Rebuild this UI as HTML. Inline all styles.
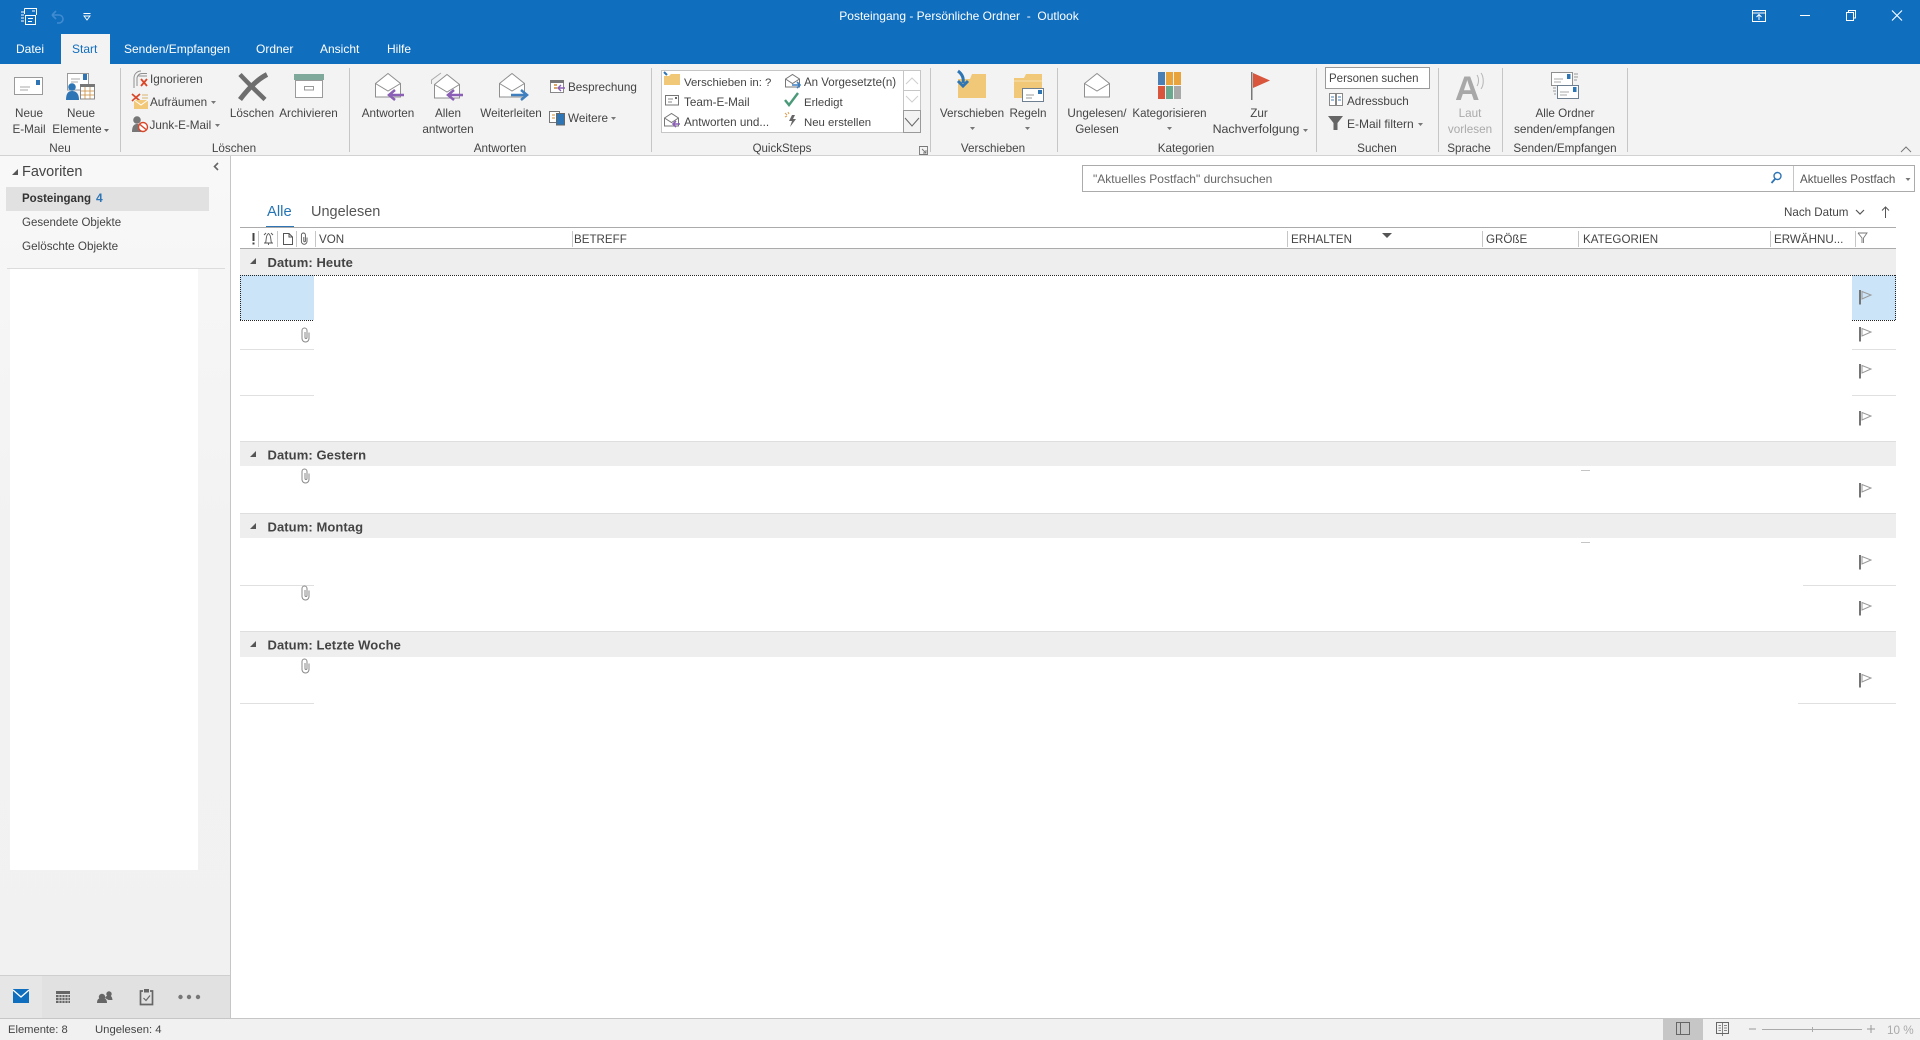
<!DOCTYPE html>
<html lang="de"><head><meta charset="utf-8"><title>Posteingang - Persönliche Ordner - Outlook</title>
<style>
html,body{margin:0;padding:0;width:1920px;height:1040px;overflow:hidden;background:#fff}
svg{display:block;font-family:"Liberation Sans",sans-serif;font-size:11.7px}
text{fill:#444}
.m{text-anchor:middle}
.w{fill:#fff;font-size:12px}
.t{font-size:11.6px}
.b{font-weight:bold;font-size:13px;letter-spacing:.08px}
.g{fill:#aaa}
</style></head><body>
<svg width="1920" height="1040" viewBox="0 0 1920 1040" xmlns="http://www.w3.org/2000/svg">
<defs>
<g id="flag"><rect x="0" y="0" width="2" height="14.5" fill="#757575"/><path d="M3 1.5V9L12 5Z" fill="none" stroke="#999" stroke-width="1"/></g>
<g id="clip"><path d="M8 5.5V11.5a3.5 3.5 0 0 1-7 0V3.5a2.5 2.5 0 0 1 5 0V10.5a1 1 0 0 1-2 0V5" fill="none" stroke="#888" stroke-width="1"/></g>
<g id="tri"><path d="M0 6L6 0V6Z" fill="#555"/></g>
<g id="open"><path d="M.5 10.5L13 .5 25.5 10.5V24H.5Z" fill="#fff" stroke="#8f8f8f"/><path d="M.5 10.5L13 18 25.5 10.5" fill="none" stroke="#8f8f8f"/></g>
<g id="mini"><path d="M.5 5L7.5 .5 14.5 5V13H.5Z" fill="#fff" stroke="#777"/><path d="M.5 5L7.5 9.5 14.5 5" fill="none" stroke="#777"/></g>
<linearGradient id="sb" x1="0" y1="0" x2="0" y2="1"><stop offset="0" stop-color="#f8f8f8"/><stop offset=".45" stop-color="#f2f2f2"/><stop offset="1" stop-color="#f1f1f1"/></linearGradient>
</defs>

<!-- title bar -->
<rect width="1920" height="64" fill="#106ebe"/>
<rect x="61" y="34" width="49" height="30" fill="#f3f3f3"/>
<g fill="none" stroke="#fff" stroke-width="1">
<path d="M24.5 8.5H36.5V15M24.5 8.5V14M21 12H24M21 15H24M21 18H24M21 21H24"/><rect x="25.5" y="15.5" width="10" height="9"/><path d="M28 18.5H33M28 21.5H32M32 11H35"/>
</g>
<path d="M52 15H59a4 4 0 0 1 0 8h-2M52 15l4-4M52 15l4 4" fill="none" stroke="#3f8bd0" stroke-width="1.6"/>
<path d="M83.5 13.5H90.5" stroke="#fff"/><path d="M84 16H90L87 20Z" fill="none" stroke="#fff" stroke-width=".9"/>
<text class="w m" x="959" y="20">Posteingang - Persönliche Ordner &#160;-&#160; Outlook</text>
<g fill="none" stroke="#fff">
<rect x="1752.5" y="10.5" width="13" height="11"/><path d="M1753 13H1765"/><path d="M1759 20V15M1756.5 17l2.5-2.5 2.5 2.5"/>
<path d="M1800 15.5H1810"/>
<rect x="1846.5" y="12.5" width="7" height="8"/><path d="M1848.5 12V10.5H1855.5V18H1854"/>
<path d="M1892 10.5L1902 20.5M1902 10.5L1892 20.5" stroke-width="1.1"/>
</g>
<text class="w" x="16" y="53">Datei</text>
<text x="72" y="53" style="fill:#106ebe;font-size:12px">Start</text>
<text class="w" x="124" y="53">Senden/Empfangen</text>
<text class="w" x="256" y="53">Ordner</text>
<text class="w" x="320" y="53">Ansicht</text>
<text class="w" x="387" y="53">Hilfe</text>

<!-- ribbon -->
<rect y="64" width="1920" height="92" fill="#f3f3f3"/>
<rect y="155" width="1920" height="1" fill="#d2d2d2"/>
<g fill="#c6c6c6">
<rect x="120" y="68" width="1" height="84"/><rect x="349" y="68" width="1" height="84"/><rect x="651" y="68" width="1" height="84"/><rect x="930" y="68" width="1" height="84"/><rect x="1057" y="68" width="1" height="84"/><rect x="1316" y="68" width="1" height="84"/><rect x="1438" y="68" width="1" height="84"/><rect x="1502" y="68" width="1" height="84"/><rect x="1627" y="68" width="1" height="84"/>
</g>

<!-- Neu -->
<rect x="14.5" y="77.5" width="28" height="17" fill="#fff" stroke="#9a9a9a"/><rect x="36" y="80" width="4" height="5" fill="#2e75b5"/><path d="M20 87H30M20 90H28" stroke="#aaa"/>
<path d="M67.5 73.5H88.5V90H67.5Z" fill="#fff" stroke="#9a9a9a"/><rect x="83" y="74" width="4" height="6" fill="#2e75b5"/><path d="M71 79H80M71 82H78" stroke="#aaa"/>
<circle cx="72" cy="87" r="3.8" fill="#2e75b5"/><path d="M66 100c0-7 2.5-9 6-9s7 2 7 9Z" fill="#2e75b5"/>
<rect x="80.5" y="85" width="14" height="14" fill="#fff" stroke="#888"/><rect x="80" y="84" width="15" height="3" fill="#777"/><path d="M85 87V99M90 87V99M81 91H94M81 95H94" stroke="#c98a3a" stroke-width=".8"/>
<text class="m" x="29" y="117">Neue</text><text class="m" x="29" y="133">E-Mail</text>
<text class="m" x="81" y="117">Neue</text><text class="m" x="77" y="133">Elemente</text><path d="M104 129h5l-2.5 3z" fill="#666"/>
<text class="m" x="60" y="152">Neu</text>

<!-- Löschen -->
<g fill="none"><path d="M137 84V76.5a5 5 0 0 1 5-5H147M134 86V76a7 7 0 0 1 7-7" stroke="#8f8f8f" transform="translate(0 2)"/><path d="M138.5 76H147" stroke="#8f8f8f"/><path d="M141 79L147 86M147 79L141 86" stroke="#d9472b" stroke-width="1.8"/></g>
<text x="150" y="83">Ignorieren</text>
<path d="M132 94L140 101M140 94L132 101" stroke="#d9472b" stroke-width="1.8"/><path d="M134 100H148V109H134Z" fill="#f2c879"/><path d="M134 100L141 105 148 100" fill="none" stroke="#fff"/><path d="M142 95H148M142 98H148" stroke="#d8b36c"/>
<text x="150" y="106">Aufräumen</text><path d="M211 101h5l-2.5 3z" fill="#777"/>
<circle cx="137" cy="120" r="3.8" fill="#777"/><path d="M132 132c0-6 2-8 5-8s5 2 5 8Z" fill="#777"/><circle cx="143" cy="127" r="4.5" fill="#fff" stroke="#d9472b" stroke-width="1.4"/><path d="M140 124.5L146 129.5" stroke="#d9472b" stroke-width="1.4"/>
<text x="149.5" y="129">Junk-E-Mail</text><path d="M215 124h5l-2.5 3z" fill="#777"/>
<path d="M240 74.5C247 82 255 90 265 99.5" fill="none" stroke="#6e6e6e" stroke-width="4.5"/><path d="M267 74.5C258 79 248 89 240 99.5" fill="none" stroke="#6e6e6e" stroke-width="5"/>
<rect x="294" y="74" width="30" height="6" fill="#7fa99b"/><rect x="295.5" y="80.5" width="27" height="17" fill="#fff" stroke="#9a9a9a"/><rect x="304.5" y="86.5" width="9" height="3.5" fill="none" stroke="#999"/>
<text class="m" x="252" y="117">Löschen</text><text class="m" x="308.5" y="117">Archivieren</text>
<text class="m" x="234" y="152">Löschen</text>

<!-- Antworten -->
<use href="#open" x="375" y="73"/><path d="M404 95H390M395 90l-6 5 6 5" fill="none" stroke="#8a5fb5" stroke-width="2.5"/>
<path d="M431.5 84V80L441 73" fill="none" stroke="#aaa"/><use href="#open" x="434" y="74"/><path d="M463 95H449M454 90l-6 5 6 5" fill="none" stroke="#8a5fb5" stroke-width="2.5"/>
<use href="#open" x="499" y="73"/><path d="M511 95H526M521 90l6 5-6 5" fill="none" stroke="#3f7fbf" stroke-width="2.5"/>
<rect x="550.5" y="80.5" width="13" height="12" fill="#fff" stroke="#888"/><rect x="550" y="80" width="14" height="3" fill="#777"/><path d="M554 85H557M554 88H557" stroke="#d08a2e" stroke-width="1.5"/><path d="M565 88H558M561 85l-3 3 3 3" fill="none" stroke="#8a5fb5" stroke-width="1.4"/>
<rect x="549.5" y="111.5" width="10" height="11" fill="#fff" stroke="#777"/><rect x="556.5" y="113.5" width="8" height="11.5" fill="#2e75b5" stroke="#666"/><path d="M552 115H555M552 118H555" stroke="#d08a2e"/>
<text class="m" x="388" y="117">Antworten</text><text class="m" x="448" y="117">Allen</text><text class="m" x="448" y="133">antworten</text><text class="m" x="511" y="117">Weiterleiten</text>
<text x="568" y="91">Besprechung</text><text x="568" y="122">Weitere</text><path d="M611 117h5l-2.5 3z" fill="#777"/>
<text class="m" x="500" y="152">Antworten</text>

<!-- QuickSteps -->
<rect x="661.5" y="70.5" width="259" height="62" fill="#fff" stroke="#c6c6c6"/>
<path d="M903.5 70.5V132.5" stroke="#c6c6c6"/><path d="M904 90.5H920M904 110.5H920" stroke="#c6c6c6"/><rect x="903.5" y="110.5" width="17" height="22" fill="#f3f3f3" stroke="#9a9a9a"/>
<path d="M906 84l6-6 6 6M906 96l6 6 6-6" fill="none" stroke="#cfcfcf"/><path d="M905 118l7 8 7-8" fill="none" stroke="#666"/>
<path d="M664 76H669L671 74H680V85H664Z" fill="#f0c878"/><path d="M664 72l3 3" stroke="#2e75b5" stroke-width="2"/>
<rect x="665.5" y="95.5" width="13" height="9.5" fill="#fff" stroke="#777"/><path d="M668 99H673M668 102H672" stroke="#888"/><rect x="675" y="97" width="2" height="2" fill="#666"/>
<use href="#mini" x="664" y="113"/><path d="M680 124H673M676 121l-3 3 3 3" fill="none" stroke="#8a5fb5" stroke-width="1.6"/>
<use href="#mini" x="785" y="74"/><path d="M792 85H800M797 82l3 3-3 3" fill="none" stroke="#3f7fbf" stroke-width="1.6"/>
<path d="M785 100l4 5 9-12" fill="none" stroke="#4a9a7a" stroke-width="2.4"/>
<path d="M792 115l-3 6h3l-2 6 6-8h-3l2-4Z" fill="#666"/><path d="M785 113l2 2M785 117l2-1M788 112l1 2" stroke="#e0a050"/>
<g style="font-size:11.4px"><text x="684" y="86">Verschieben in: ?</text><text x="684" y="106" style="font-size:11.7px">Team-E-Mail</text><text x="684" y="126" style="font-size:11.7px">Antworten und...</text>
<text x="804" y="86" style="font-size:11.5px">An Vorgesetzte(n)</text><text x="804" y="106">Erledigt</text><text x="804" y="126">Neu erstellen</text></g>
<text class="m" x="782" y="152" style="font-size:11.5px">QuickSteps</text>
<path d="M919.5 146.5H927.5V154.5H919.5Z M922 149L926 153M926 150V153H923" fill="none" stroke="#777" stroke-width=".9"/>

<!-- Verschieben -->
<path d="M958 79H970L972 74H986V98H958Z" fill="#f0c878"/><path d="M958 71c4 3 6 7 5 12M958 81l5 5 5-5" fill="none" stroke="#2e75b5" stroke-width="3"/>
<path d="M1014 78H1024L1026 74H1042V98H1014Z" fill="#f0c878"/><path d="M1014 81H1042" stroke="#f8e2b2"/><rect x="1022.5" y="88.5" width="21" height="13" fill="#fff" stroke="#6d7f90"/><rect x="1038" y="90" width="4" height="4" fill="#2e75b5"/><path d="M1026 95H1034M1026 98H1032" stroke="#999"/>
<text class="m" x="972" y="117">Verschieben</text><path d="M970 127h5l-2.5 3z" fill="#777"/><text class="m" x="1028" y="117">Regeln</text><path d="M1025 127h5l-2.5 3z" fill="#777"/>
<text class="m" x="993" y="152">Verschieben</text>

<!-- Kategorien -->
<use href="#open" x="1084" y="73"/>
<rect x="1158" y="72" width="7" height="13" fill="#4a7fb5"/><rect x="1166" y="72" width="7" height="13" fill="#e8a33c"/><rect x="1174" y="72" width="7" height="13" fill="#e8a33c"/>
<rect x="1158" y="86" width="7" height="13" fill="#d9553c"/><rect x="1166" y="86" width="7" height="13" fill="#6aa88f"/><rect x="1174" y="86" width="7" height="13" fill="#a8a8a8"/>
<rect x="1251" y="72" width="1.5" height="28" fill="#777"/><path d="M1253 73V88L1270 80.5Z" fill="#d9553c"/>
<text class="m" x="1097" y="117">Ungelesen/</text><text class="m" x="1097" y="133">Gelesen</text>
<text class="m" x="1169.5" y="117" style="font-size:11.5px">Kategorisieren</text><path d="M1167 127h5l-2.5 3z" fill="#777"/>
<text class="m" x="1259" y="117">Zur</text><text class="m" x="1256" y="133" style="font-size:12.4px">Nachverfolgung</text><path d="M1303 129h5l-2.5 3z" fill="#777"/>
<text class="m" x="1186" y="152">Kategorien</text>

<!-- Suchen -->
<rect x="1325.5" y="67.5" width="104" height="21" fill="#fff" stroke="#9a9a9a"/>
<text x="1329" y="82" style="font-size:11.5px">Personen suchen</text>
<rect x="1329.5" y="93.5" width="6" height="12" fill="#fff" stroke="#888"/><rect x="1336.5" y="93.5" width="6" height="12" fill="#fff" stroke="#888"/><path d="M1331 97H1334M1331 100H1334M1338 97H1341M1338 100H1341" stroke="#4a7fb5"/>
<text x="1347" y="105">Adressbuch</text>
<path d="M1328 116H1343L1337.5 123V130H1333.5V123Z" fill="#666"/>
<text x="1347" y="128" style="font-size:12px">E-Mail filtern</text><path d="M1418 123h5l-2.5 3z" fill="#777"/>
<text class="m" x="1377" y="152">Suchen</text>

<!-- Sprache / Senden -->
<text x="1455" y="100" style="font-size:34px;font-weight:bold;fill:#a8a8a8">A</text>
<path d="M1477 75c2 3 2 8 0 11M1481 73c3 4 3 12 0 16" fill="none" stroke="#b5b5b5"/>
<text class="m g" x="1470" y="117">Laut</text><text class="m g" x="1470" y="133">vorlesen</text><text class="m" x="1469" y="152">Sprache</text>
<rect x="1551.5" y="72.5" width="21" height="13" fill="#fff" stroke="#8f8f8f"/><rect x="1567" y="74" width="3.5" height="5" fill="#2e75b5"/><path d="M1554 79H1563M1554 82H1561" stroke="#aaa"/>
<rect x="1557.5" y="85.5" width="21" height="13" fill="#fff" stroke="#6d7f90"/><rect x="1573" y="87" width="3.5" height="5" fill="#2e75b5"/><path d="M1560 92H1569M1560 95H1567" stroke="#aaa"/>
<path d="M1574 74H1578M1574 77H1578M1574 80H1577M1553 88H1556M1553 91H1556M1554 94H1556" stroke="#999"/>
<text class="m" x="1565" y="117">Alle Ordner</text><text class="m" x="1564.5" y="133" style="font-size:11.8px">senden/empfangen</text><text class="m" x="1565" y="152" style="font-size:11.7px">Senden/Empfangen</text>
<path d="M1901 152l5-5 5 5" fill="none" stroke="#777"/>

<!-- sidebar -->
<rect y="156" width="230" height="862" fill="url(#sb)"/>
<rect x="230" y="156" width="1" height="862" fill="#c6c6c6"/>
<rect x="10" y="269" width="188" height="601" fill="#fff"/>
<path d="M12 175L18 169V175Z" fill="#555"/>
<text x="22" y="176" style="font-size:14.5px">Favoriten</text>
<path d="M218 163l-3.5 3.5 3.5 3.5" fill="none" stroke="#666" stroke-width="1.6"/>
<rect x="6" y="187" width="203" height="24" fill="#e1e1e1"/>
<text x="22" y="202" style="font-weight:bold;font-size:11.5px;fill:#333">Posteingang</text>
<text x="96" y="202" style="font-weight:bold;font-size:12px;fill:#2e75b5">4</text>
<text x="22" y="226" style="font-size:11.5px">Gesendete Objekte</text>
<text class="t" x="22" y="250" style="font-size:11.7px">Gelöschte Objekte</text>
<rect x="7" y="268" width="218" height="1" fill="#dcdcdc"/>
<!-- nav -->
<rect y="975" width="230" height="43" fill="#e1e1e1"/><rect y="975" width="230" height="1" fill="#cfcfcf"/>
<rect width="42" y="976" height="42" fill="#e6e6e6"/>
<rect x="13" y="989" width="16" height="14" fill="#106ebe"/><path d="M13 990L21 997 29 990" fill="none" stroke="#fff" stroke-width="1.3"/>
<rect x="56" y="991" width="14" height="3" fill="#666"/><path d="M56 995h14v8h-14z" fill="#666"/><path d="M59 995V1003M62 995V1003M65 995V1003M68 995V1003M56 997.5H70M56 1000.5H70" stroke="#e1e1e1" stroke-width=".8"/>
<circle cx="102" cy="997" r="3.2" fill="#666"/><path d="M97 1003c0-4 2-5 5-5s5 1 5 5Z" fill="#666"/><circle cx="109" cy="994" r="2.7" fill="#666"/><path d="M105 998c1-2 2-2.5 4-2.5 2 0 3 1 3.5 4.5h-4Z" fill="#666"/>
<path d="M143 991H140.5V1004.5H152.5V991H150" fill="none" stroke="#666" stroke-width="1.7"/><rect x="144" y="989" width="5" height="3.5" fill="#666"/><path d="M143.5 998l2.5 2.5 4-5" fill="none" stroke="#666" stroke-width="1.2"/>
<circle cx="180.5" cy="997" r="2.2" fill="#777"/><circle cx="189" cy="997" r="2.2" fill="#777"/><circle cx="198" cy="997" r="2.2" fill="#777"/>

<!-- search -->
<rect x="1082.5" y="165.5" width="832" height="26" fill="#fff" stroke="#ababab"/>
<rect x="1793" y="166" width="1" height="25" fill="#c6c6c6"/>
<text x="1093" y="183" style="font-size:12px;fill:#666">"Aktuelles Postfach" durchsuchen</text>
<circle cx="1777.5" cy="176" r="3.5" fill="none" stroke="#2e75b5" stroke-width="1.4"/><path d="M1775 179l-3.5 4" stroke="#2e75b5" stroke-width="1.8"/>
<text x="1800" y="183" style="font-size:11.6px;fill:#555">Aktuelles Postfach</text>
<path d="M1905.5 178h5l-2.5 3z" fill="#777"/>

<!-- tabs -->
<text x="267" y="216" style="font-size:14.8px;fill:#2474b5">Alle</text>
<text x="311" y="216" style="font-size:14.5px;fill:#555">Ungelesen</text>
<rect x="266" y="226" width="28" height="1.5" fill="#2e75b5"/>
<text x="1784" y="216" style="font-size:11.6px">Nach Datum</text>
<path d="M1856 210l4 4 4-4" fill="none" stroke="#555" stroke-width="1.2"/>
<path d="M1885.5 218V207M1882 210.5l3.5-3.5 3.5 3.5" fill="none" stroke="#555"/>

<!-- header -->
<rect x="240" y="227" width="1656" height="1" fill="#ababab"/>
<rect x="240" y="248" width="1656" height="1" fill="#ababab"/>
<g fill="#c6c6c6">
<rect x="258" y="231" width="1" height="16"/><rect x="277" y="231" width="1" height="16"/><rect x="296" y="231" width="1" height="16"/><rect x="315" y="231" width="1" height="16"/><rect x="572" y="231" width="1" height="16"/><rect x="1287" y="231" width="1" height="16"/><rect x="1482" y="231" width="1" height="16"/><rect x="1578" y="231" width="1" height="16"/><rect x="1770" y="231" width="1" height="16"/><rect x="1855" y="231" width="1" height="16"/>
</g>
<rect x="252.5" y="233" width="2" height="8" fill="#444"/><rect x="252.5" y="242.5" width="2" height="2" fill="#444"/>
<path d="M264 243H273M265.5 243c1-2 0-8 3-9.5 3 1.5 2 7.5 3 9.5M266 233l-2 2M271 233l2 2M268.5 243v2" fill="none" stroke="#555" stroke-width=".9"/>
<path d="M283.5 233.5H289L292.5 237V244.5H283.5Z M289 233.5V237H292.5" fill="none" stroke="#555"/>
<path d="M307 237.5V241.5a2.8 2.8 0 0 1-5.6 0V235a2 2 0 0 1 4 0V241a.8 .8 0 0 1-1.6 0V237" fill="none" stroke="#555" stroke-width=".9"/>
<text class="t" x="319" y="243">VON</text><text class="t" x="574" y="243">BETREFF</text><text class="t" x="1291" y="243">ERHALTEN</text>
<path d="M1382 233H1392L1387 238Z" fill="#555"/>
<text class="t" x="1486" y="243">GRÖßE</text><text class="t" x="1583" y="243">KATEGORIEN</text><text class="t" x="1774" y="243">ERWÄHNU...</text>
<path d="M1858 233H1867L1863.5 238V243M1858 233L1862 238V243" fill="none" stroke="#777" stroke-width=".9"/>

<!-- groups -->
<rect x="240" y="249" width="1656" height="26" fill="#eee"/>
<rect x="240" y="441" width="1656" height="25" fill="#eee"/><rect x="240" y="441" width="1656" height="1" fill="#dedede"/>
<rect x="240" y="513" width="1656" height="25" fill="#eee"/><rect x="240" y="513" width="1656" height="1" fill="#dedede"/>
<rect x="240" y="631" width="1656" height="26" fill="#eee"/><rect x="240" y="631" width="1656" height="1" fill="#dedede"/>
<use href="#tri" x="250" y="258"/><use href="#tri" x="250" y="451"/><use href="#tri" x="250" y="523"/><use href="#tri" x="250" y="641"/>
<text class="b" x="267.5" y="267">Datum: Heute</text>
<text class="b" x="267.5" y="459.5">Datum: Gestern</text>
<text class="b" x="267.5" y="531.5">Datum: Montag</text>
<text class="b" x="267.5" y="649.5">Datum: Letzte Woche</text>

<!-- selected row -->
<rect x="240" y="275" width="74" height="45" fill="#cce4f7"/>
<rect x="1852" y="275" width="44" height="45" fill="#cce4f7"/>
<path d="M240 275.5H1896M1895.5 275V320.5M1852 320.5H1896M240 320.5H314M240.5 275V320.5" fill="none" stroke="#222" stroke-width="1" stroke-dasharray="1 1"/>

<!-- row lines -->
<g fill="#e0e0e0">
<rect x="240" y="349" width="74" height="1"/><rect x="240" y="395" width="74" height="1"/><rect x="240" y="585" width="74" height="1"/><rect x="240" y="703" width="74" height="1"/>
<rect x="1852" y="349" width="44" height="1"/><rect x="1852" y="395" width="44" height="1"/><rect x="1803" y="585" width="93" height="1"/><rect x="1798" y="703" width="98" height="1"/>
</g>
<rect x="1581" y="470" width="9" height="1" fill="#c4c4c4"/><rect x="1581" y="542" width="9" height="1" fill="#c4c4c4"/>

<use href="#clip" x="301" y="327"/><use href="#clip" x="301" y="468"/><use href="#clip" x="301" y="585"/><use href="#clip" x="301" y="658"/>
<use href="#flag" x="1859" y="290"/><use href="#flag" x="1859" y="327"/><use href="#flag" x="1859" y="364"/><use href="#flag" x="1859" y="411"/><use href="#flag" x="1859" y="483"/><use href="#flag" x="1859" y="555"/><use href="#flag" x="1859" y="601"/><use href="#flag" x="1859" y="673"/>

<!-- status -->
<rect y="1018" width="1920" height="22" fill="#f1f1f1"/><rect y="1018" width="1920" height="1" fill="#c6c6c6"/>
<text x="8" y="1033" style="font-size:11.2px">Elemente: 8</text><text x="95" y="1033" style="font-size:11.3px">Ungelesen: 4</text>
<rect x="1663" y="1019" width="40" height="21" fill="#c6c6c6"/>
<rect x="1676.5" y="1022.5" width="13" height="12" fill="none" stroke="#666"/><path d="M1680.5 1023V1034" stroke="#666"/>
<rect x="1716.5" y="1022.5" width="12" height="11" fill="none" stroke="#666"/><path d="M1722.5 1022V1036M1718.5 1025.5H1721M1718.5 1028H1721M1718.5 1030.5H1721M1724 1025.5H1727M1724 1028H1727M1724 1030.5H1727" stroke="#666" stroke-width=".8"/>
<path d="M1749 1029H1756M1867 1029H1875M1871 1025V1033" stroke="#999"/>
<path d="M1762 1029.5H1862" stroke="#aaa"/><path d="M1812.5 1027V1032" stroke="#aaa"/>
<text x="1887" y="1034" style="font-size:11.7px;fill:#aaa">10 %</text>
</svg>
</body></html>
